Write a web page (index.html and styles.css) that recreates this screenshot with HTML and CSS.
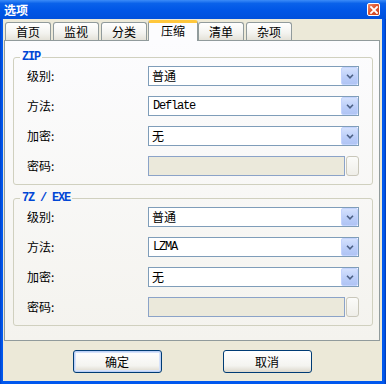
FILE: index.html
```html
<!DOCTYPE html>
<html lang="zh-CN">
<head>
<meta charset="utf-8">
<title>选项</title>
<link rel="stylesheet" href="styles.css">
</head>
<body>
<div class="window">
  <div class="titlebar">
    <span class="title">选项</span>
    <span class="close">
      <svg width="8" height="8" viewBox="0 0 8 8"><path d="M1 1 L7 7 M7 1 L1 7" stroke="#fff" stroke-width="1.8" stroke-linecap="square"/></svg>
    </span>
  </div>
  <div class="frame">
    <div class="client">
      <div class="tabs">
        <div class="tab">首页</div>
        <div class="tab">监视</div>
        <div class="tab">分类</div>
        <div class="tab active">压缩</div>
        <div class="tab">清单</div>
        <div class="tab">杂项</div>
      </div>
      <div class="panel">
        <fieldset class="group">
          <legend class="legend">ZIP</legend>
          <div class="rows">
            <div class="row">
              <span class="label">级别:</span>
              <div class="combo"><span class="value">普通</span><span class="drop"><svg width="8" height="5" viewBox="0 0 8 5"><path d="M1 0.8 L4 3.8 L7 0.8" fill="none" stroke="#4D6185" stroke-width="1.6"/></svg></span></div>
            </div>
            <div class="row">
              <span class="label">方法:</span>
              <div class="combo"><span class="value mono">Deflate</span><span class="drop"><svg width="8" height="5" viewBox="0 0 8 5"><path d="M1 0.8 L4 3.8 L7 0.8" fill="none" stroke="#4D6185" stroke-width="1.6"/></svg></span></div>
            </div>
            <div class="row">
              <span class="label">加密:</span>
              <div class="combo"><span class="value">无</span><span class="drop"><svg width="8" height="5" viewBox="0 0 8 5"><path d="M1 0.8 L4 3.8 L7 0.8" fill="none" stroke="#4D6185" stroke-width="1.6"/></svg></span></div>
            </div>
            <div class="row">
              <span class="label">密码:</span>
              <div class="field disabled"></div>
              <span class="mini"></span>
            </div>
          </div>
        </fieldset>
        <fieldset class="group second">
          <legend class="legend">7Z / EXE</legend>
          <div class="rows">
            <div class="row">
              <span class="label">级别:</span>
              <div class="combo"><span class="value">普通</span><span class="drop"><svg width="8" height="5" viewBox="0 0 8 5"><path d="M1 0.8 L4 3.8 L7 0.8" fill="none" stroke="#4D6185" stroke-width="1.6"/></svg></span></div>
            </div>
            <div class="row">
              <span class="label">方法:</span>
              <div class="combo"><span class="value mono">LZMA</span><span class="drop"><svg width="8" height="5" viewBox="0 0 8 5"><path d="M1 0.8 L4 3.8 L7 0.8" fill="none" stroke="#4D6185" stroke-width="1.6"/></svg></span></div>
            </div>
            <div class="row">
              <span class="label">加密:</span>
              <div class="combo"><span class="value">无</span><span class="drop"><svg width="8" height="5" viewBox="0 0 8 5"><path d="M1 0.8 L4 3.8 L7 0.8" fill="none" stroke="#4D6185" stroke-width="1.6"/></svg></span></div>
            </div>
            <div class="row">
              <span class="label">密码:</span>
              <div class="field disabled"></div>
              <span class="mini"></span>
            </div>
          </div>
        </fieldset>
      </div>
      <div class="buttons">
        <button class="btn default">确定</button>
        <button class="btn">取消</button>
      </div>
    </div>
  </div>
</div>
</body>
</html>
```
FILE: styles.css
```css
* { box-sizing: border-box; }
html, body { margin: 0; padding: 0; }
body {
  width: 386px;
  height: 384px;
  overflow: hidden;
  font-family: "Noto Sans CJK SC", "Noto Sans", sans-serif;
  font-size: 12px;
  color: #000;
  background: #0054E3;
}
.window {
  width: 386px;
  height: 384px;
  display: flex;
  flex-direction: column;
}
.titlebar {
  height: 19px;
  flex: none;
  display: flex;
  align-items: center;
  padding: 0 6px 0 4px;
  background: linear-gradient(#3C8CF8 0%, #0A62EA 18%, #0056E6 55%, #0050DC 100%);
}
.title {
  color: #fff;
  font-weight: bold;
  font-size: 12px;
  line-height: 19px;
}
.close {
  margin-left: auto;
  width: 13px;
  height: 13px;
  border: 1px solid #fff;
  border-radius: 2px;
  background: linear-gradient(135deg, #F08C6C 0%, #E0552F 45%, #C8401E 100%);
  display: flex;
  align-items: center;
  justify-content: center;
}
.frame {
  flex: 1;
  display: flex;
  padding: 0 4px 3px 3px;
  background: linear-gradient(90deg, #0040C8 0px, #0058EE 2px, #0058EE calc(100% - 2px), #0038B0 100%);
}
.client {
  flex: 1;
  background: #ECE9D8;
  display: flex;
  flex-direction: column;
  padding: 1px 2px 8px 1px;
}
.tabs {
  display: flex;
  height: 20px;
  padding-left: 1px;
  flex: none;
}
.tab {
  width: 46px;
  height: 18px;
  margin-top: 2px;
  margin-right: 2px;
  border: 1px solid #919B9C;
  border-bottom: none;
  border-radius: 3px 3px 0 0;
  background: linear-gradient(#FFFFFF, #F3F3EF 60%, #E4E2D8);
  text-align: center;
  line-height: 17px;
}
.tab.active {
  width: 50px;
  height: 21px;
  margin-top: 0;
  margin-left: -1px;
  margin-right: 0;
  margin-bottom: -1px;
  border-top: 3px solid #FFC73C;
  background: #FCFCFE;
  position: relative;
  z-index: 1;
  line-height: 16px;
}
.panel {
  height: 301px;
  flex: none;
  border: 1px solid #919B9C;
  background: linear-gradient(#FCFCFE, #F4F3EE);
  padding: 10px 6px 0 8px;
  display: flex;
  flex-direction: column;
}
.group {
  margin: 0;
  padding: 3px 13px 8px 13px;
  border: 1px solid #D0D0BF;
  border-radius: 3px;
  min-width: 0;
}
.group.second {
  margin-top: 7px;
}
.legend {
  margin-left: -7px;
  padding: 0 2px;
  font-family: "Liberation Mono", monospace;
  font-size: 12px;
  font-weight: bold;
  letter-spacing: -1.2px;
  line-height: 12px;
  color: #0046D5;
}
.rows {
  display: flex;
  flex-direction: column;
  gap: 10px;
}
.row {
  display: flex;
  align-items: center;
  height: 20px;
}
.label {
  width: 121px;
  flex: none;
  line-height: 20px;
}
.combo {
  width: 211px;
  height: 20px;
  border: 1px solid #7F9DB9;
  background: #fff;
  display: flex;
  align-items: center;
}
.value {
  flex: 1;
  padding-left: 3px;
  line-height: 18px;
}
.mono {
  font-family: "Liberation Mono", monospace;
  font-size: 12px;
  letter-spacing: -1.2px;
  padding-left: 4px;
}
.drop {
  width: 17px;
  height: 18px;
  border: 1px solid #C3D3FD;
  border-radius: 2px;
  background: linear-gradient(#D4E1FD, #BACDF8 60%, #B0C4F4);
  display: flex;
  align-items: center;
  justify-content: center;
}
.field {
  width: 197px;
  height: 20px;
  border: 1px solid #8BA3C8;
  background: #EBE9DB;
}
.mini {
  width: 13px;
  height: 20px;
  margin-left: 1px;
  border: 1px solid #C9C7BA;
  border-radius: 3px;
  background: linear-gradient(#FBFBF9, #EFEEE8);
}
.buttons {
  display: flex;
  justify-content: center;
  gap: 61px;
  margin-top: 9px;
  flex: none;
}
.btn {
  width: 89px;
  height: 23px;
  margin: 0;
  padding: 0;
  border: 1px solid #003C74;
  border-radius: 3px;
  background: linear-gradient(#FFFFFF, #F4F4F0 70%, #DCD8CC);
  font-family: "Noto Sans CJK SC", sans-serif;
  font-size: 12px;
  color: #000;
  line-height: 20px;
}
.btn.default {
  box-shadow: inset 0 0 0 1px #BCD0F6, inset 0 0 0 2px #D6E2FA;
}
```
